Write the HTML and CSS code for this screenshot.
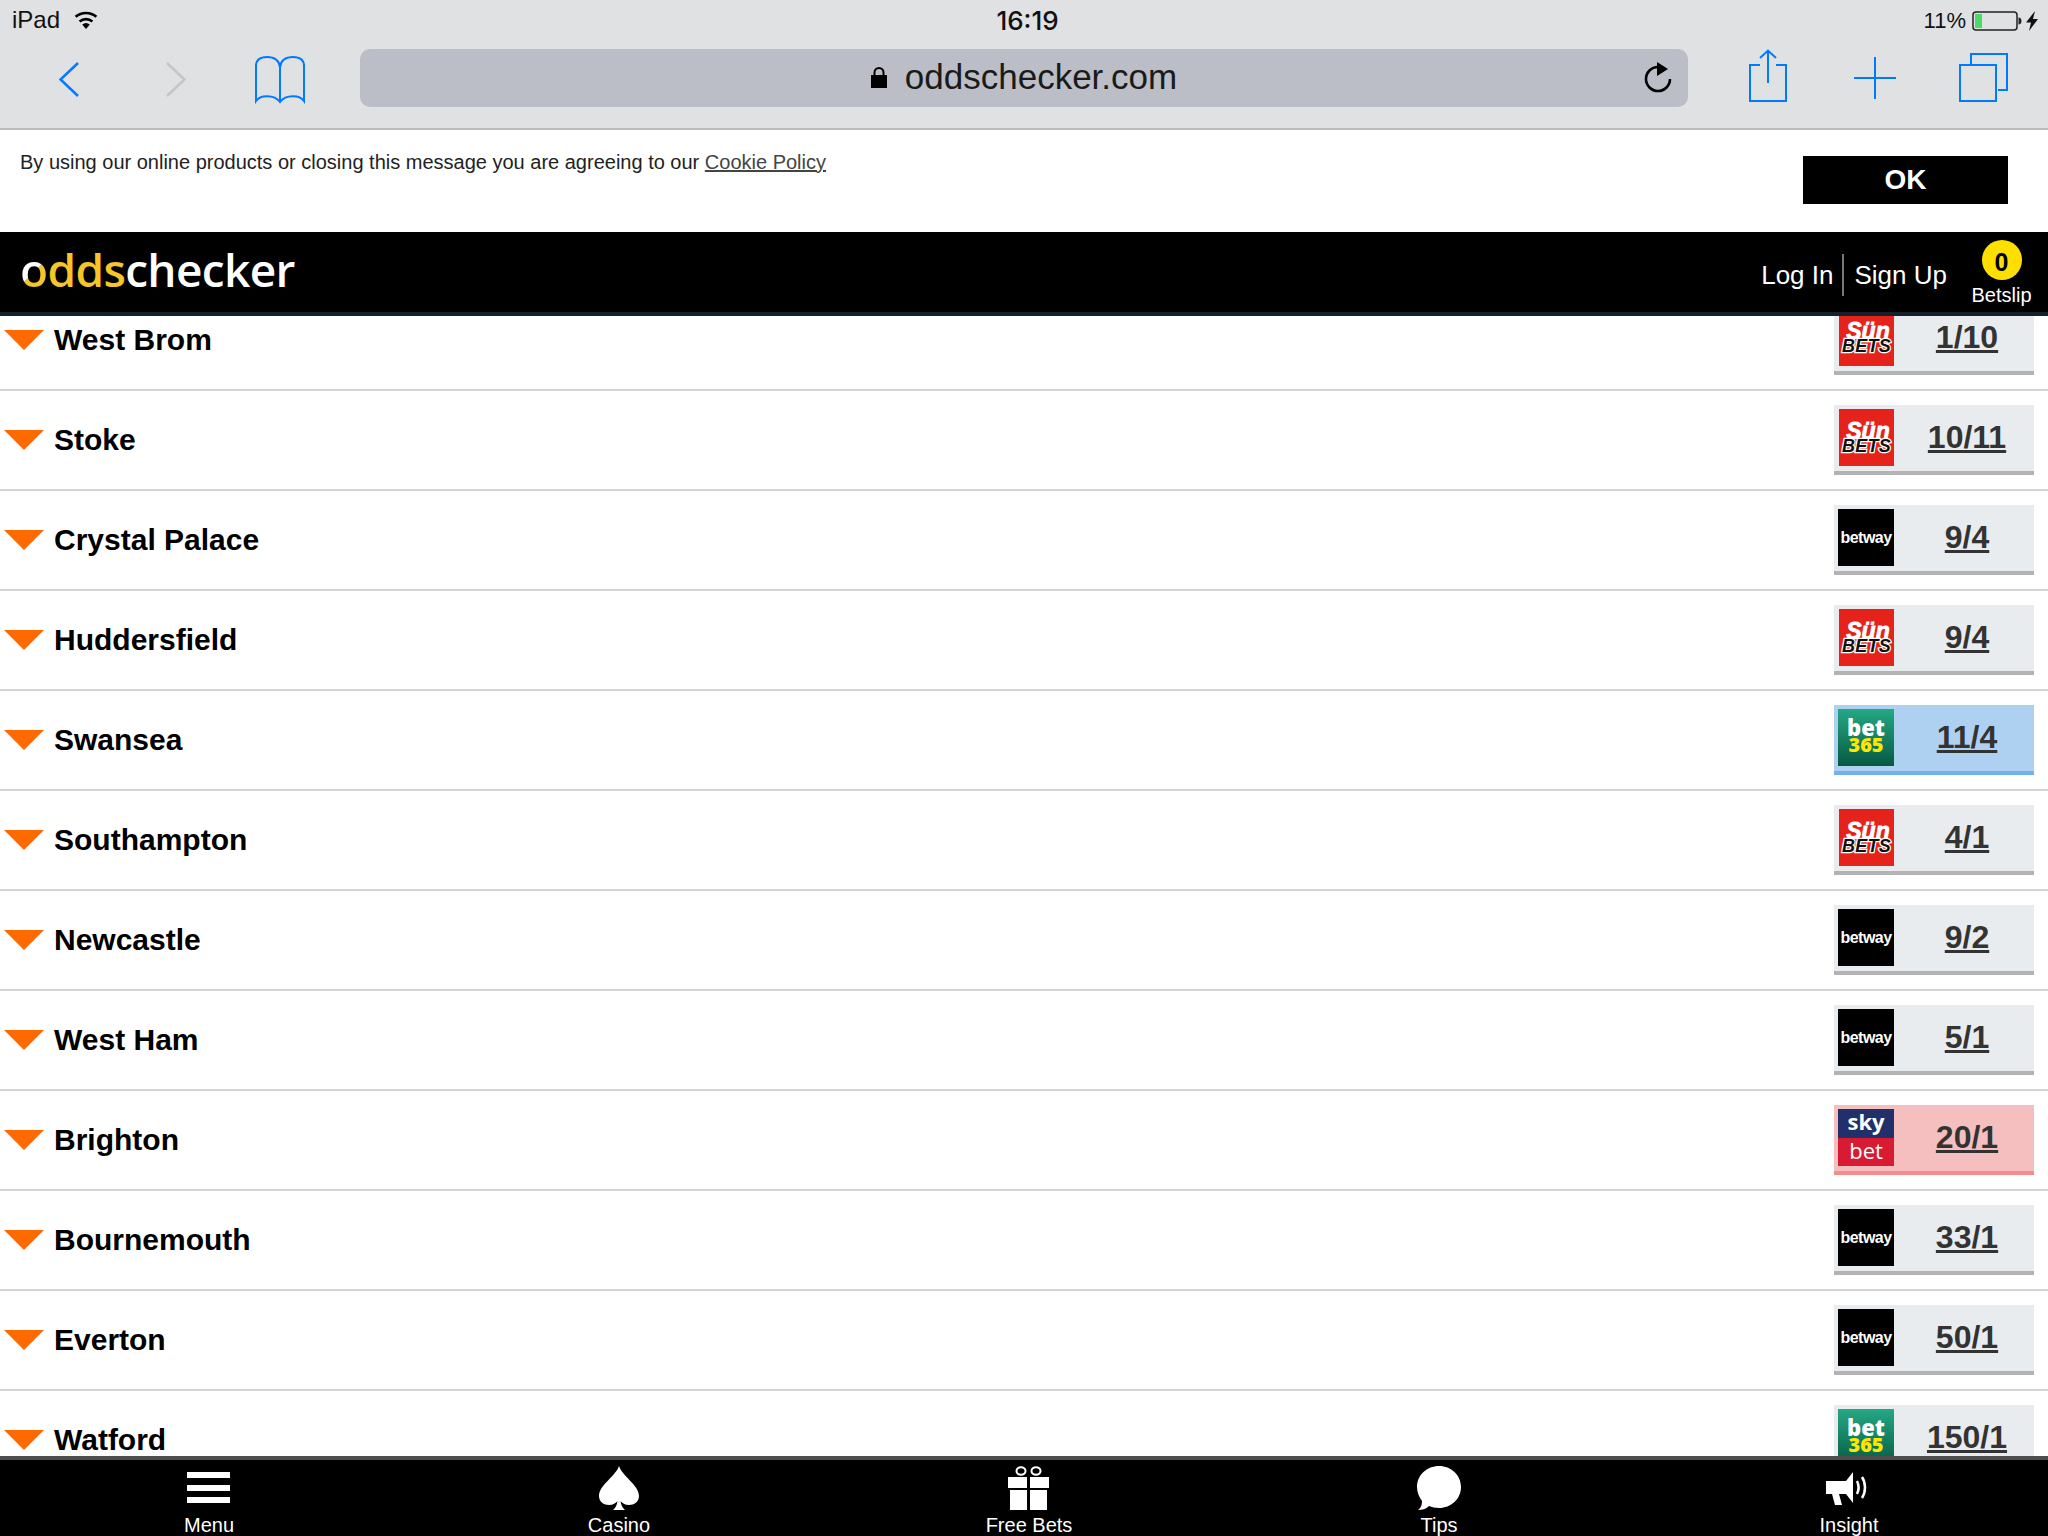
FILE: index.html
```html
<!DOCTYPE html>
<html lang="en">
<head>
    <meta charset="UTF-8">
    <title>oddschecker.com</title>
    <link rel="stylesheet" href="styles.css">
</head>
<body>
    <div class="browser">
        <div class="status">
            <div class="status-left">
                <span>iPad</span>
                <svg class="wifi" width="24" height="18" viewBox="0 0 24 18">
                    <path d="M12 18 8.2 13.6a6 6 0 0 1 7.6 0z" fill="#000"/>
                    <path d="M5.6 10.4a10 10 0 0 1 12.8 0" fill="none" stroke="#000" stroke-width="2.6"/>
                    <path d="M1.6 5.8a16 16 0 0 1 20.8 0" fill="none" stroke="#000" stroke-width="2.6"/>
                </svg>
            </div>
            <div class="status-time">16:19</div>
            <div class="status-right">
                <span class="batt-pct">11%</span>
                <svg width="50" height="20" viewBox="0 0 50 20">
                    <rect x="1" y="1" width="44" height="18" rx="3" fill="none" stroke="#222" stroke-width="1.5"/>
                    <rect x="3" y="3" width="7" height="14" fill="#4cd964"/>
                    <path d="M46.500 6.500c2 0 3 1.500 3 3.500s-1 3.500-3 3.500z" fill="#222"/>
                </svg>
                <svg class="bolt" width="12" height="20" viewBox="0 0 12 20">
                    <path d="M9 0 0 11.500h5L3 20l9-12H7z" fill="#111"/>
                </svg>
            </div>
        </div>
        <div class="toolbar">
            <svg class="ic-back" width="20" height="58" viewBox="59 49 20 58"><path d="M78 63 60.500 79.500 78 96" class="line-blue"/></svg>
            <svg class="ic-forward" width="20" height="58" viewBox="166 49 20 58"><path d="M167 63 184.500 79.500 167 96" class="line-grey"/></svg>
            <svg class="ic-book" width="50" height="58" viewBox="255 49 50 58">
                <path d="M280 67C279 60 274 57 267 57 260 57 256 60 256 66V101C260 95 274 94 280 102 286 94 300 95 304 101V66C304 60 300 57 293 57 286 57 281 60 280 67V102" class="line-blue"/>
            </svg>
            <div class="address">
                <div></div>
                <div class="url">
                    <svg width="16" height="22" viewBox="0 0 16 22">
                        <path d="M3.500 10V6.500a4.500 4.500 0 0 1 9 0V10" fill="none" stroke="#000" stroke-width="2"/>
                        <rect x="0" y="9" width="16" height="13" fill="#000"/>
                    </svg>
                    <span>oddschecker.com</span>
                </div>
                <div class="reload">
                    <svg width="30" height="58" viewBox="1643 49 30 58">
                        <path d="M1658 67A12 12 0 1 0 1670 79" fill="none" stroke="#000" stroke-width="2.600"/>
                        <path d="M1657 62 1668 69 1657 76z" fill="#000"/>
                    </svg>
                </div>
            </div>
            <svg class="ic-share" width="38" height="58" viewBox="1749 49 38 58">
                <path d="M1760 65H1750V101H1786V65H1776" class="line-blue"/>
                <path d="M1768 83V51M1760 58 1768 50.500 1776 58" class="line-blue"/>
            </svg>
            <svg class="ic-plus" width="42" height="58" viewBox="1854 49 42 58"><path d="M1875 57V99M1854 78H1896" class="line-blue"/></svg>
            <svg class="ic-tabs" width="49" height="58" viewBox="1959 49 49 58">
                <rect x="1960" y="65" width="36" height="36" class="line-blue"/>
                <path d="M1971 64V54H2007V90H1998" class="line-blue"/>
            </svg>
        </div>
    </div>

    <div class="cookie">
        <p>By using our online products or closing this message you are agreeing to our <a href="#">Cookie Policy</a></p>
        <button class="ok">OK</button>
    </div>

    <header class="site-header">
        <div class="logo"><span class="logo-o">o</span><span class="logo-y">dds</span>checker</div>
        <div class="auth">
            <a href="#">Log In</a>
            <i class="auth-sep"></i>
            <a href="#">Sign Up</a>
        </div>
        <div class="betslip">
            <div class="betslip-count">0</div>
            <div class="betslip-label">Betslip</div>
        </div>
    </header>

    <main class="list">
        <div class="list-inner">
            <div class="row">
                <i class="arrow"></i><div class="team">West Brom</div>
                <a class="odds" href="#"><div class="bk sun"><span class="sun-top">Sün</span><span class="sun-bets">BETS</span></div><span class="price">1/10</span></a>
            </div>
            <div class="row">
                <i class="arrow"></i><div class="team">Stoke</div>
                <a class="odds" href="#"><div class="bk sun"><span class="sun-top">Sün</span><span class="sun-bets">BETS</span></div><span class="price">10/11</span></a>
            </div>
            <div class="row">
                <i class="arrow"></i><div class="team">Crystal Palace</div>
                <a class="odds" href="#"><div class="bk betway">betway</div><span class="price">9/4</span></a>
            </div>
            <div class="row">
                <i class="arrow"></i><div class="team">Huddersfield</div>
                <a class="odds" href="#"><div class="bk sun"><span class="sun-top">Sün</span><span class="sun-bets">BETS</span></div><span class="price">9/4</span></a>
            </div>
            <div class="row">
                <i class="arrow"></i><div class="team">Swansea</div>
                <a class="odds odds-blue" href="#"><div class="bk b365"><span>bet</span><span class="b365-num">365</span></div><span class="price">11/4</span></a>
            </div>
            <div class="row">
                <i class="arrow"></i><div class="team">Southampton</div>
                <a class="odds" href="#"><div class="bk sun"><span class="sun-top">Sün</span><span class="sun-bets">BETS</span></div><span class="price">4/1</span></a>
            </div>
            <div class="row">
                <i class="arrow"></i><div class="team">Newcastle</div>
                <a class="odds" href="#"><div class="bk betway">betway</div><span class="price">9/2</span></a>
            </div>
            <div class="row">
                <i class="arrow"></i><div class="team">West Ham</div>
                <a class="odds" href="#"><div class="bk betway">betway</div><span class="price">5/1</span></a>
            </div>
            <div class="row">
                <i class="arrow"></i><div class="team">Brighton</div>
                <a class="odds odds-pink" href="#"><div class="bk sky"><span class="sky-top">sky</span><span class="sky-bot">bet</span></div><span class="price">20/1</span></a>
            </div>
            <div class="row">
                <i class="arrow"></i><div class="team">Bournemouth</div>
                <a class="odds" href="#"><div class="bk betway">betway</div><span class="price">33/1</span></a>
            </div>
            <div class="row">
                <i class="arrow"></i><div class="team">Everton</div>
                <a class="odds" href="#"><div class="bk betway">betway</div><span class="price">50/1</span></a>
            </div>
            <div class="row">
                <i class="arrow"></i><div class="team">Watford</div>
                <a class="odds" href="#"><div class="bk b365"><span>bet</span><span class="b365-num">365</span></div><span class="price">150/1</span></a>
            </div>
        </div>
    </main>

    <nav class="tabs">
        <a class="tab" href="#">
            <svg width="44" height="44" viewBox="0 0 44 44"><path d="M0 6H43V12H0zM0 19H43V25H0zM0 31H43V37H0z" fill="#fff"/></svg>
            <span>Menu</span>
        </a>
        <a class="tab" href="#">
            <svg width="42" height="44" viewBox="0 0 42 44"><path d="M21 0C24 10 41 19 41 30 41 36 36 39 31 39 27 39 24 37 22.500 35 23 39 24.500 42 27 44H15C17.500 42 19 39 19.500 35 18 37 15 39 11 39 6 39 1 36 1 30 1 19 18 10 21 0Z" fill="#fff"/></svg>
            <span>Casino</span>
        </a>
        <a class="tab" href="#">
            <svg width="42" height="44" viewBox="0 0 42 44">
                <ellipse cx="13" cy="5" rx="4.500" ry="3.800" fill="none" stroke="#fff" stroke-width="2"/>
                <ellipse cx="28" cy="5" rx="4.500" ry="3.800" fill="none" stroke="#fff" stroke-width="2"/>
                <path d="M0 11H19V22H0zM22 11H41V22H22zM2 24H19V44H2zM22 24H39V44H22z" fill="#fff"/>
            </svg>
            <span>Free Bets</span>
        </a>
        <a class="tab" href="#">
            <svg width="44" height="44" viewBox="0 0 44 44"><path d="M22 0C34 0 44 9 44 21 44 33 34 42 22 42 18 42 15 41 12 40 9 43 5 44 1 44 4 42 5 39 5 35 2 31 0 26 0 21 0 9 10 0 22 0Z" fill="#fff"/></svg>
            <span>Tips</span>
        </a>
        <a class="tab" href="#">
            <svg width="46" height="44" viewBox="0 0 46 44">
                <path d="M0 15H20L27 6V37L20 28H13L16 39H9L6 28H0Z" fill="#fff"/>
                <path d="M31 15C33 19 33 24 31 28M36 11C40 17 40 26 36 32" fill="none" stroke="#fff" stroke-width="2.500"/>
            </svg>
            <span>Insight</span>
        </a>
    </nav>
</body>
</html>
```
FILE: styles.css
```css
* {
    box-sizing: border-box;
}
html, body {
    margin: 0;
    height: 100%;
}
body {
    width: 2048px;
    height: 1536px;
    display: flex;
    flex-direction: column;
    overflow: hidden;
    font-family: "Liberation Sans", Arial, sans-serif;
    background: #fff;
}
a {
    color: inherit;
    text-decoration: none;
}

/* safari chrome */
.browser {
    height: 130px;
    flex: none;
    background: #e0e1e3;
    border-bottom: 2px solid #bcbcbc;
}
.status {
    height: 49px;
    padding: 6px 10px 0 12px;
    display: grid;
    grid-template-columns: 1fr auto 1fr;
    font-size: 24px;
    line-height: 28px;
    color: #111;
}
.status-left {
    display: flex;
    gap: 14px;
}
.wifi {
    margin-top: 5px;
}
.status-time {
    margin: 1px 0 0 5px;
    font-family: "Inter", "Liberation Sans", sans-serif;
    font-weight: 500;
    font-size: 26px;
}
.status-right {
    display: flex;
    justify-content: flex-end;
    gap: 6px;
}
.batt-pct {
    margin-top: 1px;
    font-size: 22px;
}
.status-right svg {
    margin-top: 5px;
}
.status-right .bolt {
    margin-left: -2px;
}
.toolbar {
    height: 58px;
    padding-left: 59px;
    display: flex;
}
.line-blue, .line-grey {
    fill: none;
    stroke: #007aff;
    stroke-width: 2;
}
.line-grey {
    stroke: #c4c5c7;
    stroke-width: 2.500;
}
.ic-back .line-blue {
    stroke-width: 2.500;
}
.ic-forward {
    margin-left: 87px;
}
.ic-book {
    margin-left: 69px;
}
.address {
    width: 1328px;
    margin-left: 55px;
    border-radius: 10px;
    background: #bbbec6;
    display: grid;
    grid-template-columns: 1fr auto 1fr;
    align-items: center;
}
.url {
    padding-bottom: 2px;
    display: flex;
    align-items: center;
    gap: 18px;
    font-size: 35px;
    color: #1a1a1a;
}
.reload {
    display: flex;
    justify-content: flex-end;
    padding-right: 15px;
}
.ic-share {
    margin-left: 61px;
}
.ic-plus {
    margin-left: 67px;
}
.ic-tabs {
    margin-left: 63px;
}

/* cookie message */
.cookie {
    height: 102px;
    flex: none;
    padding: 21px 40px 0 20px;
    display: flex;
    justify-content: space-between;
    align-items: flex-start;
    color: #222;
    font-size: 20px;
    line-height: 23px;
}
.cookie p {
    margin: 0;
}
.cookie a {
    color: #444;
    text-decoration: underline;
}
.ok {
    width: 205px;
    height: 48px;
    margin-top: 5px;
    background: #000;
    color: #fff;
    border: none;
    font: bold 28px "Liberation Sans", Arial, sans-serif;
}

/* site header */
.site-header {
    height: 84px;
    flex: none;
    display: flex;
    background: #000;
    border-bottom: 4px solid #16202a;
    color: #fff;
    position: relative;
    z-index: 2;
}
.logo {
    padding: 8px 0 0 20px;
    margin-right: auto;
    font-family: "Open Sans", sans-serif;
    font-size: 46px;
    font-weight: 600;
    line-height: 58px;
    letter-spacing: -0.65px;
}
.logo-y {
    color: #f5c52a;
}
.logo-o {
    background: linear-gradient(135deg, #fff 0 53%, #f5c52a 54%);
    -webkit-background-clip: text;
    background-clip: text;
    color: transparent;
}
.auth {
    display: flex;
    align-items: flex-start;
    padding-top: 28px;
    font-size: 26px;
    line-height: 30px;
}
.auth-sep {
    width: 2px;
    height: 42px;
    margin: -6px 11px 0 8px;
    background: #777;
}
.betslip {
    width: 59px;
    margin: 8px 17px 0 25px;
    display: flex;
    flex-direction: column;
    align-items: center;
    font-size: 20px;
    line-height: 24px;
}
.betslip-count {
    width: 40px;
    height: 40px;
    border-radius: 50%;
    background: #ffdf00;
    color: #000;
    font-size: 25px;
    font-weight: bold;
    line-height: 44px;
    text-align: center;
}
.betslip-label {
    margin-top: 3px;
}

/* selections */
.list {
    flex: 1;
    overflow: hidden;
}
.list-inner {
    margin-top: -25px;
}
.row {
    height: 100px;
    padding-left: 4px;
    display: flex;
    align-items: flex-start;
    border-bottom: 2px solid #d3d3d3;
}
.arrow {
    width: 0;
    height: 0;
    margin-top: 39px;
    border-style: solid;
    border-width: 20px 20px 0 20px;
    border-color: #ff6a00 transparent transparent transparent;
}
.team {
    margin: 32px auto 0 10px;
    font-size: 30px;
    font-weight: bold;
    line-height: 34px;
    color: #000;
}
.odds {
    width: 200px;
    height: 70px;
    margin: 14px 14px 0 0;
    display: flex;
    background: #e9ecef;
    border-bottom: 4px solid #b3b3b3;
}
.odds-blue {
    background: #afd1f1;
    border-color: #74b0ee;
}
.odds-pink {
    background: #f6bfbf;
    border-color: #f58d8d;
}
.price {
    flex: 1;
    padding-left: 6px;
    text-align: center;
    font-size: 32px;
    font-weight: bold;
    line-height: 65px;
    color: #333;
    text-decoration: underline;
    text-decoration-thickness: 3px;
}

/* bookmaker logos */
.bk {
    width: 56px;
    height: 57px;
    margin: 4px 0 0 4px;
    display: flex;
    flex-direction: column;
    align-items: center;
    justify-content: center;
}
.betway {
    background: #000;
    color: #fff;
    font-size: 16px;
    font-weight: bold;
    letter-spacing: -0.5px;
}
.sun {
    width: 55px;
    margin-left: 5px;
    background: #e5231a;
    font-style: italic;
    font-weight: bold;
}
.sun-top {
    margin: 1px 0 0 3px;
    color: #fff;
    font-size: 23px;
    line-height: 16px;
    -webkit-text-stroke: 0.8px #fff;
}
.sun-bets {
    color: #111;
    font-size: 18px;
    line-height: 15px;
    letter-spacing: 0.3px;
    -webkit-text-stroke: 2.5px #fff;
    paint-order: stroke fill;
}
.b365 {
    padding-bottom: 3px;
    background: linear-gradient(#25a885, #065a41);
    color: #fff;
    font-family: "Open Sans", sans-serif;
    font-size: 22px;
    font-weight: 800;
    line-height: 18px;
}
.b365-num {
    color: #ffe600;
    font-size: 20px;
}
.sky {
    justify-content: flex-start;
    color: #fff;
    font-family: "Open Sans", sans-serif;
}
.sky-top, .sky-bot {
    width: 100%;
    height: 50%;
    text-align: center;
    font-size: 22px;
    line-height: 25px;
}
.sky-top {
    background: #21306a;
    font-weight: 700;
}
.sky-bot {
    background: #d81b33;
}

/* bottom nav */
.tabs {
    height: 80px;
    flex: none;
    padding: 6px 0 0 4px;
    display: grid;
    grid-template-columns: repeat(5, 410px);
    overflow: hidden;
    background: #000;
    border-top: 4px solid #4d4d4d;
    color: #fff;
    position: relative;
    z-index: 2;
}
.tab {
    display: flex;
    flex-direction: column;
    align-items: center;
    font-size: 20px;
    line-height: 22px;
}
.tab svg {
    flex: none;
    margin-bottom: 4px;
}
```
